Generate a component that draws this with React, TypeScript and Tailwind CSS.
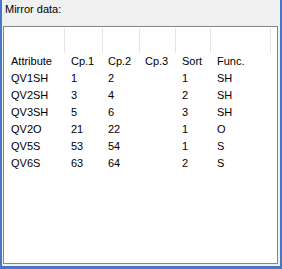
const columns = [
  { w: 'w-[61px]', pad: 'pl-[7px]' },
  { w: 'w-[38px]', pad: 'pl-[6px]' },
  { w: 'w-[37px]', pad: 'pl-[5px]' },
  { w: 'w-[36px]', pad: 'pl-[5px]' },
  { w: 'w-[35px]', pad: 'pl-[6px]' },
  { w: 'w-[60px]', pad: 'pl-[6px]' },
];

const rows = [
  ['Attribute', 'Cp.1', 'Cp.2', 'Cp.3', 'Sort', 'Func.'],
  ['QV1SH', '1', '2', '', '1', 'SH'],
  ['QV2SH', '3', '4', '', '2', 'SH'],
  ['QV3SH', '5', '6', '', '3', 'SH'],
  ['QV2O', '21', '22', '', '1', 'O'],
  ['QV5S', '53', '54', '', '1', 'S'],
  ['QV6S', '63', '64', '', '2', 'S'],
];

const App = () => {
  return (
    <div
      className="w-[282px] h-[269px] flex flex-col bg-[#f0f0f0] border-l-2 border-r-2 border-b-[3px] border-[#4676c6] text-[11px] text-black"
      style={{ fontFamily: '"Liberation Sans", Arial, sans-serif' }}
    >
      <div className="h-[26px] pl-[3px] pt-[1px] leading-[16px]">Mirror data:</div>
      <div className="flex-1 ml-[1px] mr-[2px] mb-[2px] bg-white border border-[#828790] flex flex-col">
        {/* empty column headers */}
        <div className="h-[26px] pt-[1px] flex">
          {columns.map((c, i) => (
            <div key={i} className={`${c.w} h-[25px] border-r border-[#e5e5e5]`} />
          ))}
        </div>
        {rows.map((r, i) => (
          <div key={i} className="flex h-[17px] leading-[17px]">
            {r.map((v, j) => (
              <div key={j} className={`${columns[j].w} ${columns[j].pad} whitespace-nowrap`}>
                {v}
              </div>
            ))}
          </div>
        ))}
      </div>
    </div>
  );
};

export default App;
